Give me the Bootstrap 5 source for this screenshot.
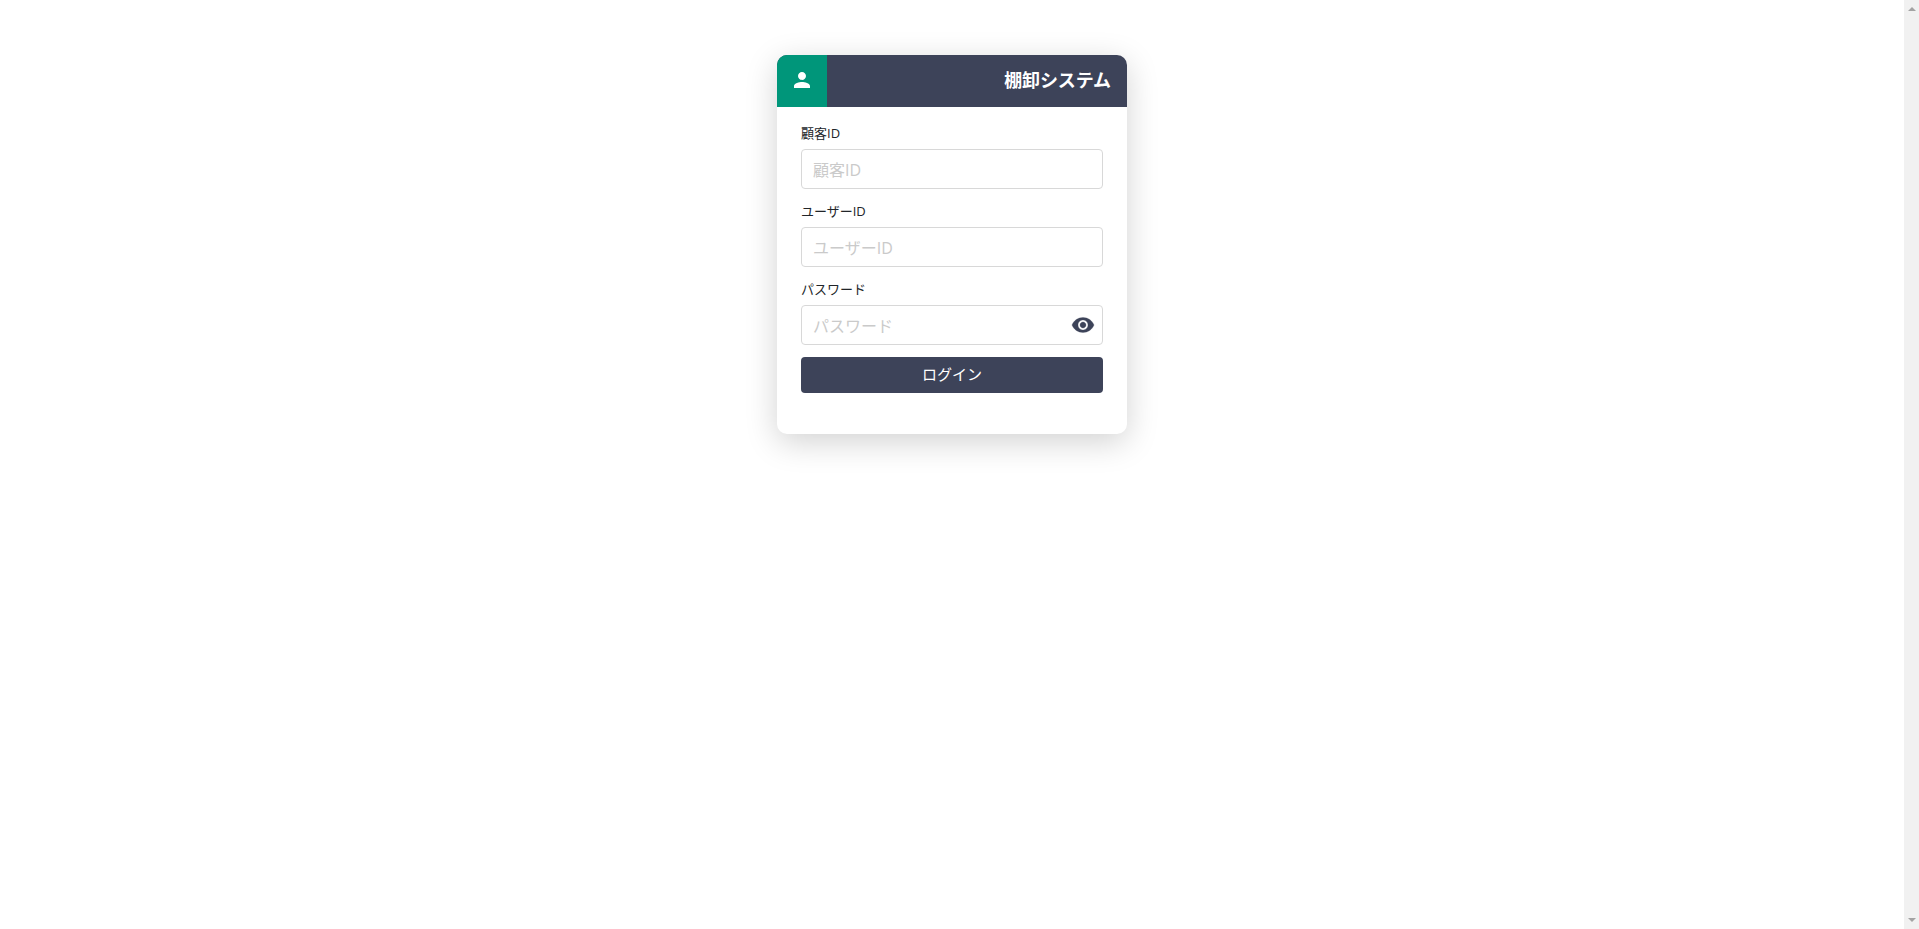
<!DOCTYPE html>
<html lang="ja">
<head>
  <meta charset="UTF-8" />
  <title>棚卸システム</title>
  <link href="https://cdn.jsdelivr.net/npm/bootstrap@5.3.3/dist/css/bootstrap.min.css" rel="stylesheet">
  <style>
    body { font-family: "Open Sans", "Noto Sans CJK JP", sans-serif; background: #fff; color: #212529; }
    .page-wrap { height: 100vh; overflow: hidden; }
    .fake-scroll { width: 15px; background: #f1f1f1; padding: 7px 0; }
    .login-box { width: 350px; margin-top: 55px; height: 379px; border-radius: 10px; box-shadow: 0 8px 32px rgba(0,0,0,.18); background: #fff; }
    .login-head { height: 52px; background: #3d4359; border-radius: 10px 10px 0 0; overflow: hidden; }
    .login-icon { width: 50px; background: #00967a; padding-bottom: 2px; padding-right: 1px; }
    .login-title { font-size: 18px; font-weight: 700; padding: 0 16px 2px 0; letter-spacing: -.1px; }
    .login-body { padding: 16px 24px 0; }
    .field-label { font-size: 13px; line-height: 20px; margin-bottom: 6px; display: block; }
    .field-wrap { margin-bottom: 12px; }
    .form-control.field-input { height: 40px; border: 1px solid #d8d8d8; border-radius: 4px; padding: 8px 11px 6px; font-size: 16px; }
    .field-input::placeholder { color: #cacaca; }
    .eye-btn { right: 8px; top: 8px; line-height: 0; background: none; border: 0; padding: 0; }
    .eye-btn svg { stroke: #3d4359; stroke-width: .3; }
    .btn.login-btn { height: 36px; background: #3d4359; color: #fff; border: 0; border-radius: 4px; font-size: 15px; padding: 0 0 2px; }
  </style>
</head>
<body>
  <div class="page-wrap d-flex">
    <div class="flex-grow-1 d-flex justify-content-center align-items-start">
      <div class="login-box">
        <div class="login-head d-flex text-white">
          <div class="login-icon d-flex align-items-center justify-content-center">
            <svg width="24" height="24" viewBox="0 0 24 24" fill="#fff"><path d="M12 12c2.21 0 4-1.79 4-4s-1.79-4-4-4-4 1.79-4 4 1.79 4 4 4zm0 2c-2.67 0-8 1.34-8 4v2h16v-2c0-2.66-5.33-4-8-4z"/></svg>
          </div>
          <div class="login-title flex-grow-1 d-flex align-items-center justify-content-end">棚卸システム</div>
        </div>
        <form class="login-body">
          <div class="field-wrap">
            <label class="field-label" for="customerId">顧客ID</label>
            <input class="form-control field-input" id="customerId" type="text" placeholder="顧客ID">
          </div>
          <div class="field-wrap">
            <label class="field-label" for="userId">ユーザーID</label>
            <input class="form-control field-input" id="userId" type="text" placeholder="ユーザーID">
          </div>
          <div class="field-wrap">
            <label class="field-label" for="password">パスワード</label>
            <div class="position-relative">
              <input class="form-control field-input" id="password" type="password" placeholder="パスワード">
              <button class="eye-btn position-absolute" type="button">
                <svg width="24" height="24" viewBox="0 0 24 24" fill="#3d4359"><path d="M12 4.5C7 4.5 2.73 7.61 1 12c1.73 4.39 6 7.5 11 7.5s9.27-3.11 11-7.5c-1.73-4.39-6-7.5-11-7.5zM12 17c-2.76 0-5-2.24-5-5s2.24-5 5-5 5 2.24 5 5-2.24 5-5 5zm0-8c-1.66 0-3 1.34-3 3s1.34 3 3 3 3-1.34 3-3-1.34-3-3-3z"/></svg>
              </button>
            </div>
          </div>
          <button class="btn login-btn w-100" type="button">ログイン</button>
        </form>
      </div>
    </div>
    <div class="fake-scroll d-flex flex-column justify-content-between align-items-center flex-shrink-0">
      <svg width="8" height="4" viewBox="0 0 8 4" fill="#a3a3a3"><path d="M4 0l4 4H0z"/></svg>
      <svg width="8" height="4" viewBox="0 0 8 4" fill="#a3a3a3"><path d="M0 0h8L4 4z"/></svg>
    </div>
  </div>
  <script src="https://cdn.jsdelivr.net/npm/bootstrap@5.3.3/dist/js/bootstrap.bundle.min.js"></script>
</body>
</html>
